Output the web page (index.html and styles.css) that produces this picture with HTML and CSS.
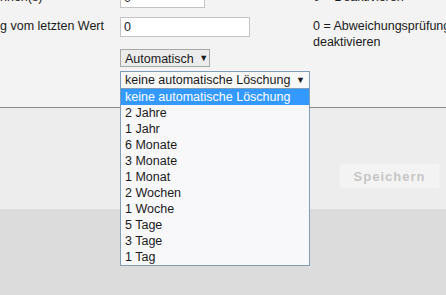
FILE: index.html
```html
<!DOCTYPE html>
<html>

<head>
    <title>Einstellungen</title>
    <link rel="stylesheet" href="styles.css">
</head>

<body>
    <div class="settings">
        <div class="row">
            <div class="label">nnen(s)</div>
            <div class="control"><input type="text" class="field short" value="0"></div>
            <div class="hint">0 = Deaktivieren</div>
        </div>

        <div class="row">
            <div class="label">g vom letzten Wert</div>
            <div class="control"><input type="text" class="field" value="0"></div>
            <div class="hint">0 = Abweichungsprüfung deaktivieren</div>
        </div>

        <div class="row">
            <div class="label"></div>
            <div class="control">
                <button class="menu-button">Automatisch <span class="arrow">&#9660;</span></button>
            </div>
        </div>

        <div class="row">
            <div class="label"></div>
            <div class="control dropdown">
                <div class="select">
                    <span>keine automatische Löschung</span>
                    <span class="arrow">&#9660;</span>
                </div>
                <ul class="options">
                    <li class="selected">keine automatische Löschung</li>
                    <li>2 Jahre</li>
                    <li>1 Jahr</li>
                    <li>6 Monate</li>
                    <li>3 Monate</li>
                    <li>1 Monat</li>
                    <li>2 Wochen</li>
                    <li>1 Woche</li>
                    <li>5 Tage</li>
                    <li>3 Tage</li>
                    <li>1 Tag</li>
                </ul>
            </div>
        </div>
    </div>

    <div class="actions">
        <button class="save">Speichern</button>
    </div>

    <div class="footer"></div>
</body>

</html>
```

FILE: styles.css
```css
html, body {
    margin: 0;
    height: 100%;
    overflow: hidden;
}

body {
    font-family: "Liberation Sans", Arial, sans-serif;
    font-size: 12.5px;
    color: #1a1a1a;
    background-color: #dcdcdc;
}

.settings {
    background-color: #f3f3f3;
    border-bottom: 1px solid #8c8c8c;
    height: 119px;
    margin-top: -12px;
    display: flex;
    flex-direction: column;
}

.row {
    display: flex;
    align-items: flex-start;
    height: 20px;
    margin-bottom: 9px;
}

.row:nth-child(2) {
    margin-bottom: 12px;
}

.row:nth-child(3) {
    height: 18px;
    margin-bottom: 4px;
}

.label {
    width: 120px;
    flex-shrink: 0;
    line-height: 16px;
    padding-top: 1px;
    white-space: nowrap;
}

.control {
    width: 193px;
    flex-shrink: 0;
}

.hint {
    width: 145px;
    flex-shrink: 0;
    line-height: 16px;
    padding-top: 1px;
}

.field {
    box-sizing: border-box;
    width: 130px;
    height: 20px;
    border: 1px solid #c4c4c4;
    background-color: white;
    font-family: "Liberation Sans", Arial, sans-serif;
    font-size: 12.5px;
    color: #1a1a1a;
    padding: 0 3px;
    margin: 0;
}

.field.short {
    width: 85px;
}

.menu-button {
    box-sizing: border-box;
    height: 18px;
    width: 90px;
    margin: 0;
    padding: 0 4px;
    border: 1px solid #a8a8a8;
    background-color: #ececec;
    font-family: "Liberation Sans", Arial, sans-serif;
    font-size: 12.5px;
    color: #1a1a1a;
    text-align: left;
    line-height: 16px;
    white-space: nowrap;
}

.arrow {
    font-size: 9px;
    vertical-align: 2px;
    margin-left: 2px;
}

.dropdown {
    position: relative;
}

.select {
    box-sizing: border-box;
    width: 190px;
    height: 18px;
    border: 1px solid #7f9db9;
    background-color: #f8f8f8;
    padding: 0 4px 0 4px;
    line-height: 16px;
    display: flex;
    justify-content: space-between;
    white-space: nowrap;
}

.options {
    position: absolute;
    top: 18px;
    left: 0;
    box-sizing: border-box;
    width: 190px;
    margin: 0;
    padding: 0;
    list-style: none;
    border: 1px solid #7f9db9;
    border-top: none;
    background-color: #f8f8fa;
    z-index: 2;
}

.options li {
    height: 16px;
    line-height: 16px;
    padding-left: 4px;
    white-space: nowrap;
}

.options li.selected {
    background-color: #3399ff;
    color: white;
}

.actions {
    background-color: #ededed;
    height: 101px;
    display: flex;
    justify-content: flex-end;
    align-items: flex-start;
}

.save {
    margin: 55px 6px 0 0;
    width: 101px;
    height: 26px;
    border: 1px solid #efefef;
    background-color: #f3f3f3;
    color: #c6c6c6;
    font-family: "Liberation Sans", Arial, sans-serif;
    font-size: 13px;
    font-weight: bold;
    letter-spacing: 1px;
}

.footer {
    height: 90px;
    background-color: #dcdcdc;
}
```
